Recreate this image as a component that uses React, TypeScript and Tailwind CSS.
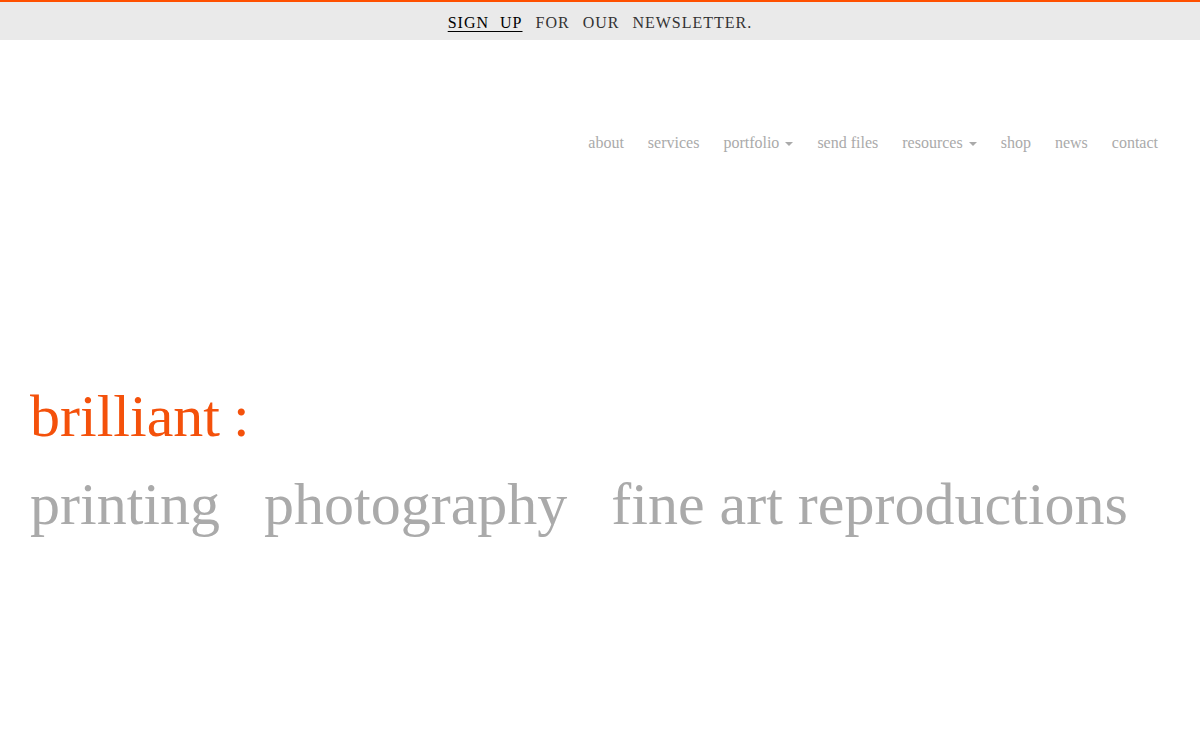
import React from 'react';

const navItems: { label: string; caret?: boolean }[] = [
  { label: 'about' },
  { label: 'services' },
  { label: 'portfolio', caret: true },
  { label: 'send files' },
  { label: 'resources', caret: true },
  { label: 'shop' },
  { label: 'news' },
  { label: 'contact' },
];

export default function App() {
  return (
    <div className="min-h-screen bg-white font-['Liberation_Serif',_'Times_New_Roman',_serif]">
      {/* Newsletter bar */}
      <div className="border-t-2 border-[#ff5000] bg-[#eaeaea] h-10 flex items-center justify-center">
        <p className="text-[16px] leading-6 uppercase tracking-[1px] [word-spacing:8px] text-[#333] pt-[4px]">
          <a href="#" className="text-black underline underline-offset-[3px] [word-spacing:6px]">Sign up</a>{' '}
          for our newsletter.
        </p>
      </div>

      {/* Nav */}
      <nav className="flex justify-end pr-[42px] mt-[91px]">
        <ul className="flex gap-6 text-[16px] leading-6 text-[#aaaaaa]">
          {navItems.map((item) => (
            <li key={item.label} className="flex items-center">
              <a href="#">{item.label}</a>
              {item.caret && (
                <span className="ml-[6px] mt-[2px] inline-block w-0 h-0 border-x-4 border-x-transparent border-t-4 border-t-[#aaaaaa]" />
              )}
            </li>
          ))}
        </ul>
      </nav>

      {/* Hero */}
      <section className="pl-[30px] mt-[231px] flex flex-col gap-[28px]">
        <h1 className="text-[60px] leading-none text-[#f4510b]">
          brilliant<span className="ml-[-2px]"> :</span>
        </h1>
        <h2 className="text-[60px] leading-none text-[#aaaaaa] flex gap-[44px]">
          <span>printing</span>
          <span>photography</span>
          <span>fine art reproductions</span>
        </h2>
      </section>
    </div>
  );
}
